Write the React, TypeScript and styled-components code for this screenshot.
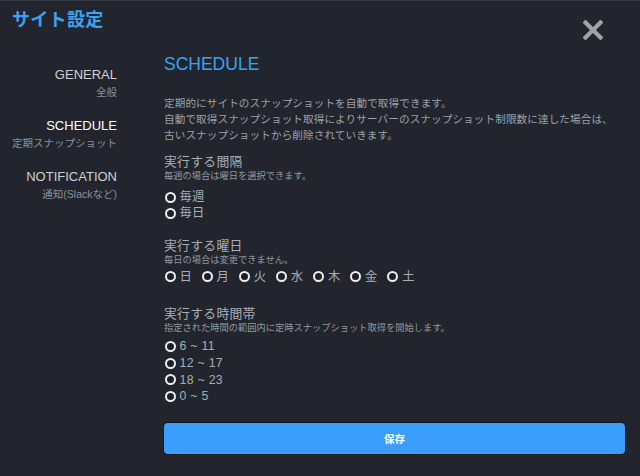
import React from "react";
import styled, { createGlobalStyle } from "styled-components";

const Global = createGlobalStyle`
  html, body { margin: 0; padding: 0; background: #22252d; }
  body { font-family: "Liberation Sans", "Noto Sans CJK JP", sans-serif; }
  * { box-sizing: border-box; }
`;

const Modal = styled.div`
  width: 640px;
  height: 476px;
  background: #22252d;
  border-top: 1px solid #343840;
  display: flex;
  flex-direction: column;
  overflow: hidden;
`;

const Header = styled.header`
  height: 49px;
  display: flex;
  justify-content: space-between;
  align-items: flex-start;
  padding: 9px 37px 0 12px;
`;

const Title = styled.h1`
  margin: 0;
  font-size: 18px;
  line-height: 20px;
  font-weight: 700;
  color: #3ba2f4;
  letter-spacing: 0.3px;
`;

const CloseButton = styled.button`
  margin-top: 10px;
  width: 20px;
  height: 20px;
  padding: 0;
  border: none;
  background: transparent;
  display: flex;
  cursor: pointer;
`;

const Body = styled.div`
  display: grid;
  grid-template-columns: 117px 1fr;
  column-gap: 47px;
  padding-right: 15px;
`;

const Sidebar = styled.nav`
  display: flex;
  flex-direction: column;
  align-items: flex-end;
  gap: 18px;
  padding-top: 16.5px;
`;

const NavItem = styled.div`
  display: flex;
  flex-direction: column;
  align-items: flex-end;
`;

const NavLabel = styled.div<{ $active?: boolean }>`
  font-size: 13px;
  line-height: 16px;
  color: ${(p) => (p.$active ? "#ffffff" : "#cfd0d2")};
`;

const NavSub = styled.div`
  margin-top: 2px;
  font-size: 10.5px;
  line-height: 15px;
  color: #8c9199;
  white-space: nowrap;
`;

const Main = styled.main`
  display: flex;
  flex-direction: column;
`;

const Heading = styled.h2`
  margin: 4px 0 0;
  font-size: 17.5px;
  line-height: 20px;
  font-weight: 400;
  color: #3ba2f4;
`;

const Description = styled.p`
  margin: 21px 0 0;
  font-size: 10.6px;
  line-height: 16px;
  color: #9ca1a9;
  white-space: nowrap;
  letter-spacing: 0.1px;
`;

const Section = styled.section<{ $gap: number }>`
  margin-top: ${(p) => p.$gap}px;
  display: flex;
  flex-direction: column;
`;

const SectionTitle = styled.h3`
  margin: 0;
  font-size: 12.8px;
  line-height: 16px;
  font-weight: 400;
  color: #a9aeb6;
  letter-spacing: 0.3px;
`;

const SectionNote = styled.div`
  font-size: 9.25px;
  line-height: 12px;
  color: #9398a0;
  white-space: nowrap;
`;

const Options = styled.div<{ $row?: boolean; $gap: number; $lh?: number }>`
  margin-top: ${(p) => p.$gap}px;
  display: flex;
  flex-direction: ${(p) => (p.$row ? "row" : "column")};
  column-gap: 9px;
  line-height: ${(p) => p.$lh ?? 16}px;
`;

const OptionLabel = styled.label`
  display: flex;
  align-items: center;
  gap: 4px;
  font-size: 12.3px;
  color: #a9aeb6;
  letter-spacing: 0.3px;
  cursor: pointer;
`;

const RadioInput = styled.input.attrs({ type: "radio" })`
  appearance: none;
  margin: 0 0 0 0.5px;
  width: 11px;
  height: 11px;
  border-radius: 50%;
  border: 2.6px solid #eeeeee;
  background: #1d2027;
  flex-shrink: 0;
`;

const SaveButton = styled.button`
  margin-top: 18px;
  height: 31px;
  width: 100%;
  border: none;
  border-radius: 4px;
  background: #3b9dfc;
  box-shadow: 0 0 0 1px rgba(0, 0, 0, 0.35);
  color: #ffffff;
  font-family: inherit;
  font-size: 10.5px;
  font-weight: 700;
  cursor: pointer;
`;

const Radio = ({ name, label }: { name: string; label: string }) => (
  <OptionLabel>
    <RadioInput name={name} />
    {label}
  </OptionLabel>
);

const days = ["日", "月", "火", "水", "木", "金", "土"];
const times = ["6 ~ 11", "12 ~ 17", "18 ~ 23", "0 ~ 5"];

export default function App() {
  return (
    <>
      <Global />
      <Modal>
        <Header>
          <Title>サイト設定</Title>
          <CloseButton aria-label="close">
            <svg width="20" height="20" viewBox="0 0 20 20">
              <path
                d="M2.5 2.5 L17.5 17.5 M17.5 2.5 L2.5 17.5"
                stroke="#a3a3a3"
                strokeWidth="4.2"
                strokeLinecap="square"
              />
            </svg>
          </CloseButton>
        </Header>
        <Body>
          <Sidebar>
            <NavItem>
              <NavLabel>GENERAL</NavLabel>
              <NavSub>全般</NavSub>
            </NavItem>
            <NavItem>
              <NavLabel $active>SCHEDULE</NavLabel>
              <NavSub>定期スナップショット</NavSub>
            </NavItem>
            <NavItem>
              <NavLabel>NOTIFICATION</NavLabel>
              <NavSub>通知(Slackなど)</NavSub>
            </NavItem>
          </Sidebar>
          <Main>
            <Heading>SCHEDULE</Heading>
            <Description>
              定期的にサイトのスナップショットを自動で取得できます。
              <br />
              自動で取得スナップショット取得によりサーバーのスナップショット制限数に達した場合は、
              <br />
              古いスナップショットから削除されていきます。
            </Description>
            <Section $gap={11}>
              <SectionTitle>実行する間隔</SectionTitle>
              <SectionNote>毎週の場合は曜日を選択できます。</SectionNote>
              <Options $gap={7}>
                <Radio name="interval" label="毎週" />
                <Radio name="interval" label="毎日" />
              </Options>
            </Section>
            <Section $gap={16.5}>
              <SectionTitle>実行する曜日</SectionTitle>
              <SectionNote>毎日の場合は変更できません。</SectionNote>
              <Options $row $gap={3}>
                {days.map((d) => (
                  <Radio key={d} name="day" label={d} />
                ))}
              </Options>
            </Section>
            <Section $gap={21.5}>
              <SectionTitle>実行する時間帯</SectionTitle>
              <SectionNote>
                指定された時間の範囲内に定時スナップショット取得を開始します。
              </SectionNote>
              <Options $gap={4} $lh={16.8}>
                {times.map((t) => (
                  <Radio key={t} name="time" label={t} />
                ))}
              </Options>
            </Section>
            <SaveButton>保存</SaveButton>
          </Main>
        </Body>
      </Modal>
    </>
  );
}
